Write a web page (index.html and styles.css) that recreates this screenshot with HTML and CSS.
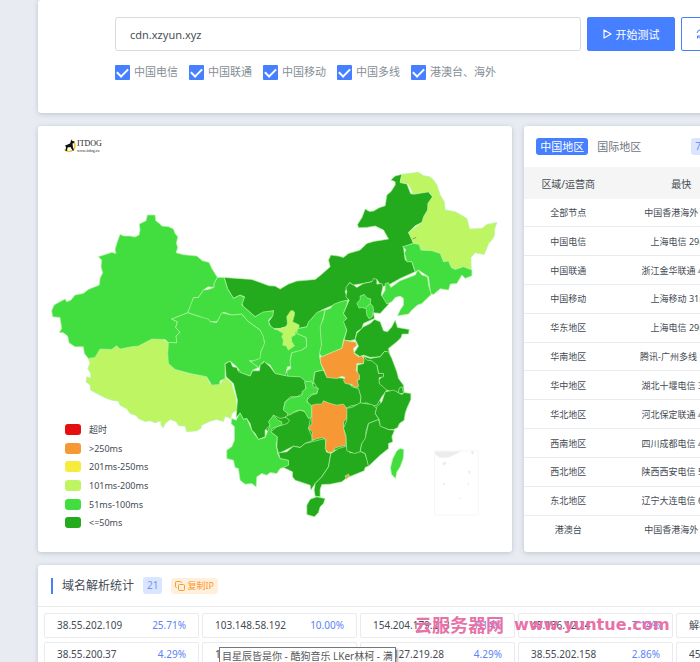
FILE: index.html
```
<!DOCTYPE html>
<html lang="zh-CN">
<head>
  <meta charset="UTF-8">
  <meta name="viewport" content="width=device-width, initial-scale=1.0">
  <title>ITDOG</title>
  <link rel="stylesheet" href="styles.css">
</head>
<body>
  <main class="page">
    <!-- Search form -->
    <form class="card search">
      <div class="search-row">
        <input type="text" class="host" aria-label="域名" value="cdn.xzyun.xyz">
        <button type="button" class="btn btn-primary">
          <svg width="9" height="10" viewBox="0 0 9 10"><path d="M1 1v8l7-4z" fill="none" stroke="#fff" stroke-width="1.2" stroke-linejoin="round"/></svg>
          开始测试
        </button>
        <button type="button" class="btn btn-outline">
          <svg width="10" height="10" viewBox="0 0 10 10"><path d="M1 4a4 4 0 0 1 7.500-1M9 6a4 4 0 0 1-7.500 1M8.500 .5v2.500H6M1.500 9.500V7H4" fill="none" stroke="#467fff"/></svg>
          持续测试
        </button>
      </div>
      <div class="lines">
        <label><input type="checkbox" checked>中国电信</label>
        <label><input type="checkbox" checked>中国联通</label>
        <label><input type="checkbox" checked>中国移动</label>
        <label><input type="checkbox" checked>中国多线</label>
        <label><input type="checkbox" checked>港澳台、海外</label>
      </div>
    </form>

    <div class="columns">
      <!-- Map -->
      <section class="card map-card">
        <svg class="map" viewBox="0 0 1422 1278" role="img" aria-label="中国地图">
          <g transform="translate(36 702)">
            <path class="ms200" d="M115-5L150-33 185-32 200-43 215-34 245-40 280-50 300-63 330-65 355-53 356 10 375 28 410 38 470 50 478 70 510 72 525 52 545 70 551 95 557 110 560 150 545 160 542 175 525 168 520 184 500 178 480 183 455 195 452 205 440 212 410 215 405 198 385 196 378 184 360 178 345 190 340 203 333 195 332 182 315 188 300 182 285 184 265 175 258 166 240 160 230 146 210 135 205 123 185 120 165 113 140 100 122 90 120 75 108 65 110 50 122 54 122 40 113 25 120 10z"/>
          </g>
          <g transform="translate(6 222)">
            <path class="ms100" d="M322 45H345L347 62 358 70 365 78 385 80 400 87 405 100 413 110 409 130 413 142 408 158 430 164 470 168 487 182 507 187 515 205 532 232 522 250 522 262 504 260 490 270 475 292 460 293 454 315 443 338 395 357 412 365 407 382 420 397 408 407 412 428 385 427 375 418 335 417 310 430 295 438 275 440 240 447 230 437 215 448 180 447 165 472 145 475 133 460 130 440 105 440 87 428 83 408 70 398 58 397 65 385 60 352 38 350 35 332 42 315 60 305 75 297 80 305 93 300 105 285 130 280 145 268 178 255 180 235 188 218 183 200 185 180 175 170 215 157 228 160 225 148 232 125 240 103 252 108 270 108 285 111 297 105 300 90 298 72 318 62z"/>
          </g>
          <g transform="translate(486 372)">
            <path class="ms50" d="M110 360L345 370 530 430 560 500 500 600 380 600 300 590 240 590 200 540 130 480z"/>
            <path class="ms50" d="M72 82L155 88 180 97 207 107 225 108 240 117 265 102 290 93 345 88 362 75 390 50 385 30 392 15 415 18 430 22 445 10 480 0 500-20 520-26 565-33 550-60 525-72 500-68 475-67 472-77 485-97 495-123 508-116 520-117 537-127 555-133 560-165 572-175 585-195 585-205 572-210 585-222 605-227 600-205 620-198 632-168 662-172 685-175 697-160 682-115 676-92 665-83 645-73 625-53 635-35 640-20 610-8 615 30 635 35 645 65 600 85 565 105 545 110 530 88 515 95 490 100 460 105 448 98 435 125 445 150 400 165 365 180 335 205 320 230 295 235 275 225 240 235 215 235 205 215 215 202 220 182 185 190 165 200 130 170 125 160 133 140 120 135 100 145 82 115z"/>
            <path class="ms100" d="M52 82H72L82 115 100 145 120 135 133 142 125 165 165 200 188 186 220 182 218 198 205 210 208 225 225 238 295 228 290 250 318 262 320 290 300 303 275 308 270 330 275 348 262 350 255 378 225 370 210 345 190 335 175 352 150 335 175 325 193 275 180 240 145 215 125 192 95 195 70 186 50 215 25 215 0 200-37 188-20 143-5 142 10 120 25 118 42 112 42 100z"/>
            <path class="ms100" d="M-37 188L0 200 25 207 30 215 50 217 65 188 95 195 125 192 145 215 180 240 190 260 193 280 182 305 180 325 160 332 148 332 165 345 175 352 157 360 150 378 125 370 110 350 90 333 75 340 75 385 60 392 58 403 35 405 20 380-30 370-75 358-95 340-97 310-95 277-70 278-72 258-60 247-73 232-68 215-85 207z"/>
            <path class="ms200" d="M272 182Q285 180 283 193L277 215 297 225 295 240 285 245 285 255 273 260 275 275 283 287 265 300 258 287 248 285 250 270 245 260 250 250 230 238 258 230 262 220 260 200z"/>
            <path class="ms100" d="M375 178L370 200 362 230 365 285 358 318 362 340 370 360 345 365 340 380 342 400 318 395 305 388 262 378 260 362 272 355 270 332 275 308 305 300 320 290 318 262 290 250 292 236 320 230 325 215 335 205 350 187z"/>
            <path class="ms100" d="M375 180L390 175 400 163 420 155 443 150 440 165 430 190 440 205 432 215 440 240 430 270 425 295 400 305 365 320 358 310 364 285 360 230 370 205z"/>
            <path class="ms50" d="M440 125L437 113 448 98 460 105 470 112 490 100 515 95 520 85 530 88 530 102 545 100 548 110 543 135 560 150 566 162 540 190 520 188 523 205 490 220 485 235 470 245 465 268 450 272 432 270 440 240 430 215 440 205 430 190 447 150 437 140z"/>
            <path class="ms100" d="M470 160L480 148 480 138 492 133 500 143 512 147 510 160 518 168 520 180 516 200 507 206 500 195 498 176 485 172 477 174z"/>
            <path class="line" d="M512 160L497 172"/>
            <path class="ms50" d="M523 208L540 215 550 242 562 245 575 230 585 210 592 232 627 238 625 252 606 252 603 262 590 275 565 295 568 310 553 304 540 320 510 322 490 315 480 320 462 308 475 288 465 268 470 250 490 230 510 220z"/>
            <path class="ms50" d="M565 305L575 325 590 365 595 385 610 405 612 430 590 430 560 420 540 415 535 390 550 375 535 370 530 345 500 335 490 318 510 325 540 320 553 304z"/>
            <path class="ms50" d="M490 318L500 330 515 332 530 345 535 370 550 370 550 380 537 383 537 400 560 420 545 440 530 465 515 468 500 458 480 462 482 440 470 410 472 345 490 340z"/>
            <path class="ms50" d="M345 365L370 360 380 380 435 385 455 410 475 415 482 440 480 462 450 468 430 480 335 480 320 450 335 435 350 430 352 415 340 395z"/>
            <path class="ms250" d="M432 270L450 274 467 276 470 285 460 295 462 310 475 320 485 317 492 328 490 340 470 340 468 362 478 375 478 388 470 390 476 408 465 412 455 403 435 400 430 390 435 382 425 378 410 385 380 382 372 360 362 340 360 322 400 305 425 295z"/>
            <path class="ms50" d="M75 342L90 333 98 350 110 352 115 365 150 378 158 362 178 362 180 345 193 335 210 350 225 370 262 378 300 380 318 395 315 425 290 440 270 440 255 455 250 475 262 490 262 500 240 505 220 495 210 525 195 540 195 560 175 568 165 550 155 540 150 520 140 505 130 508 120 490 108 502 112 450 100 400 78 380z"/>
          </g>
          <g transform="translate(906 102)">
            <path class="ms200" d="M185 43L235 37 250 47 268 50 280 60 290 75 300 105 312 125 315 150 345 155 380 175 388 207 425 205 440 193 470 187 463 207 463 225 455 240 445 250 432 283 405 278 392 292 393 330 370 320 345 328 330 320 325 305 312 305 300 280 275 275 260 270 240 270 238 255 220 250 205 217 245 187 250 170 262 150 263 130 277 110 265 95 220 103 205 72 180 68z"/>
            <path class="line river" d="M217 237L228 232"/>
            <path class="ms100" d="M220 250L237 253 242 270 275 272 300 280 310 305 325 303 333 322 345 328 370 320 395 330 395 347 375 355 365 345 350 370 330 372 325 390 300 386 280 403 271 400 265 350 235 330 225 335 215 305 200 305 193 280 197 268 187 260z"/>
            <path class="ms100" d="M225 345L233 330 245 345 262 350 265 375 273 403 245 430 232 435 215 450 205 462 172 467 180 450 190 435 190 415 180 408 165 412 155 425 140 432 125 407 135 390 135 370 145 368 152 382 180 362z"/>
          </g>
          <g transform="translate(486 762)">
            <path class="ms100" d="M95 115L108 120 120 98 130 118 140 115 155 150 175 178 195 172 210 135 205 125 220 105 233 120 245 125 245 135 215 145 215 158 232 170 228 195 233 220 240 235 265 240 265 258 240 265 230 280 210 277 200 285 185 280 170 290 168 320 155 310 135 312 120 300 115 265 105 262 100 240 80 235 80 210 95 200 103 180 103 140 93 130z"/>
            <path class="ms50" d="M212 155L230 140 262 130 268 120 255 110 275 100 300 90 315 95 332 110 325 145 340 180 315 190 300 202 280 198 250 213 235 220 230 200 232 170z"/>
            <path class="ms50" d="M235 218L260 215 280 198 300 202 315 190 375 175 378 215 392 220 385 260 365 290 345 310 332 330 330 315 285 300 277 290 277 275 250 262 265 255 265 240 240 235z"/>
            <path class="ms50" d="M392 220L415 205 440 198 450 218 480 213 495 220 507 257 495 262 492 272 440 293 425 305 390 312 365 313 360 328 360 350 345 348 342 330 345 310 365 290 385 260z"/>
            <path class="ms50" d="M435 85L455 82 480 68 515 73 530 85 525 100 537 118 505 130 497 155 498 175 485 190 480 215 463 220 440 212 437 165 430 145 440 120z"/>
            <path class="ms50" d="M505 130L535 118 540 135 565 148 583 150 575 170 578 185 565 190 565 205 540 225 505 258 495 220 480 213 485 190 495 175z"/>
            <path class="ms50" d="M555 35L580 30 605 43 612 37 632 40 632 58 620 85 615 100 612 120 598 130 592 143 580 148 565 148 540 138 537 118 525 100 530 80 545 65z"/>
            <path class="line" d="M594 39L597 24 606 20 610 39"/>
            <path class="ms100" d="M313 5L335 3 340 20 355 25 350 40 335 42 323 52 320 65 333 75 335 110 325 115 312 92 298 90 280 95 270 105 250 90 255 65 275 52 303 48 308 40 305 35 318 25z"/>
            <path class="ms250" d="M335 75L350 72 365 72 370 62 390 70 410 75 430 72 440 85 440 115 430 125 430 145 437 170 437 195 415 200 403 205 400 215 385 218 375 205 378 178 365 172 335 180 337 155 325 145 335 130z"/>
            <path class="ms250" d="M435 287L445 282 449 289 442 293 439 298z"/>
            <path class="ms50" d="M330 357L350 350 375 355 370 370 360 380 355 397 343 410 320 403 320 375z"/>
            <path class="ms100" d="M600 205L611 208 609 235 600 260 590 275 586 295 574 282 571 262 578 235 590 212z"/>
          </g>
          <!-- South China Sea inset -->
          <g transform="translate(1026 522)" fill="#ececec">
            <rect x="163" y="452" width="131" height="192" fill="none" stroke="#f6f6f6" stroke-width="3"/>
            <path d="M164 454H243L205 472 180 473 166 464zM185 490l10-6 4 5-8 7zM271 456l8-4 3 8-6 3zM264 513l6-3 1 9-5 4zM189 549h6v6h-6zM261 549h7l-4 8zM236 593l5-2v8z"/>
          </g>
        </svg>
        <div class="logo">
          <svg width="13" height="14" viewBox="0 0 26 28"><path d="M19 5a10 10 0 1 1-18 16" fill="none" stroke="#e5c72e" stroke-width="3"/><path d="M15 1l2 3 4 1-1 3-3 1 1 8 2 6h-3l-4-7-6 1-1 7H3l1-8-2-3 3-1 7-3z" fill="#111"/></svg>
          <p>ITDOG<small>www.itdog.cn</small></p>
        </div>
        <ul class="legend">
          <li><i class="timeout"></i>超时</li>
          <li><i class="ms250"></i>&gt;250ms</li>
          <li><i class="ms-yellow"></i>201ms-250ms</li>
          <li><i class="ms200"></i>101ms-200ms</li>
          <li><i class="ms100"></i>51ms-100ms</li>
          <li><i class="ms50"></i>&lt;=50ms</li>
        </ul>
      </section>

      <!-- Region table -->
      <section class="card regions">
        <div class="tabs">
          <button type="button" class="tab active">中国地区</button>
          <button type="button" class="tab">国际地区</button>
          <span class="badge">74</span>
        </div>
        <table>
          <thead>
            <tr><th class="area">区域/运营商</th><th class="fast">最快</th><th></th></tr>
          </thead>
          <tbody>
            <tr><td>全部节点</td><td>中国香港海外 2ms</td><td></td></tr>
            <tr><td>中国电信</td><td>上海电信 29ms</td><td></td></tr>
            <tr><td>中国联通</td><td>浙江金华联通 40ms</td><td></td></tr>
            <tr><td>中国移动</td><td>上海移动 31ms</td><td></td></tr>
            <tr><td>华东地区</td><td>上海电信 29ms</td><td></td></tr>
            <tr><td>华南地区</td><td>腾讯-广州多线 10ms</td><td></td></tr>
            <tr><td>华中地区</td><td>湖北十堰电信 32ms</td><td></td></tr>
            <tr><td>华北地区</td><td>河北保定联通 42ms</td><td></td></tr>
            <tr><td>西南地区</td><td>四川成都电信 43ms</td><td></td></tr>
            <tr><td>西北地区</td><td>陕西西安电信 51ms</td><td></td></tr>
            <tr><td>东北地区</td><td>辽宁大连电信 60ms</td><td></td></tr>
            <tr><td>港澳台</td><td>中国香港海外 2ms</td><td></td></tr>
          </tbody>
        </table>
      </section>
    </div>

    <!-- Resolved addresses -->
    <section class="card resolve">
      <header>
        <h2>域名解析统计</h2>
        <span class="badge">21</span>
        <button type="button" class="copy">
          <svg width="10" height="10" viewBox="0 0 10 10" fill="none" stroke="#fd9a2c"><rect x="3.500" y="3.500" width="6" height="6" rx="1"/><path d="M2 6.500H1.500a1 1 0 0 1-1-1v-4a1 1 0 0 1 1-1h4a1 1 0 0 1 1 1V2"/></svg>
          复制IP
        </button>
      </header>
      <ul class="ips">
        <li>38.55.202.109<b>25.71%</b></li>
        <li>103.148.58.192<b>10.00%</b></li>
        <li>154.204.179.213<b>7.14%</b></li>
        <li>45.136.12.24<b>7.14%</b></li>
        <li>解析失败<b>7.14%</b></li>
        <li>38.55.200.37<b>4.29%</b></li>
        <li>103.148.58.19<b>4.29%</b></li>
        <li>154.127.219.28<b>4.29%</b></li>
        <li>38.55.202.158<b>2.86%</b></li>
        <li>45.136.12.2<b>2.86%</b></li>
      </ul>
    </section>
  </main>

  <div class="tooltip">目星辰皆是你 - 酷狗音乐 LKer林柯 - 满</div>
  <div class="watermark"><span>云服务器网</span><span class="site">www.yuntue.com</span></div>
</body>
</html>
```
FILE: styles.css
```
* {
  padding: 0;
  margin: 0;
  box-sizing: border-box;
}
body {
  position: relative;
  height: 100vh;
  overflow: hidden;
  font-family: "Noto Sans", "Noto Sans CJK SC", sans-serif;
  font-size: 10px;
  color: #444b54;
  background-color: #e8ecf2;
}
button,
input {
  font-family: inherit;
}
ul {
  list-style-type: none;
}

.page {
  min-width: 901px; /* wider than small windows, the right side is cut */
  padding: 0 38px;
  display: flex;
  flex-direction: column;
  gap: 13px;
}

.card {
  background-color: #fff;
  border-radius: 3px;
  box-shadow: 0 1px 5px rgba(60, 75, 100, 0.25);
}

/* Search */
.search {
  padding: 17px 94px 33px 77px;
}
.search-row {
  display: flex;
  gap: 6px;
}
.host {
  flex: 1;
  min-width: 0;
  height: 34px;
  padding: 0 14px;
  font-size: 11px;
  color: #495057;
  border: 1px solid #d9d9d9;
  border-radius: 3px;
}
.btn {
  width: 88px;
  height: 34px;
  display: flex;
  align-items: center;
  justify-content: center;
  gap: 4px;
  font-size: 11px;
  border: 1px solid #467fff;
  border-radius: 2px;
  white-space: nowrap;
}
.btn-primary {
  background-color: #467fff;
  color: #fff;
}
.btn-outline {
  background-color: #fff;
  color: #467fff;
}
.lines {
  display: flex;
  gap: 11px;
  margin-top: 13px;
}
.lines label {
  display: flex;
  align-items: center;
  gap: 4px;
  font-size: 11px;
  line-height: 16px;
  color: #868e96;
}
.lines input {
  appearance: none;
  width: 15px;
  height: 15px;
  display: flex;
  justify-content: center;
  background-color: #467fff;
  border-radius: 1px;
}
.lines input:checked::after {
  content: "";
  width: 5px;
  height: 9px;
  margin-top: 2px;
  border: solid #fff;
  border-width: 0 2px 2px 0;
  transform: rotate(45deg);
}

/* Map */
.columns {
  display: grid;
  grid-template-columns: 7fr 5fr;
  gap: 12px;
}
.map-card {
  position: relative;
}
.map {
  display: block;
  width: 100%;
}
.map path {
  stroke: #b5f3a5;
  stroke-width: 2;
  stroke-linejoin: round;
}
.map g[fill] path {
  stroke: none;
}
.map .line {
  fill: none;
}
.map .river {
  stroke: #647c4e;
}
.timeout { background-color: #e60f0f; }
.ms250 { background-color: #f69833; fill: #f69833; }
.ms-yellow { background-color: #f5ec3d; }
.ms200 { background-color: #bef663; fill: #bef663; }
.ms100 { background-color: #42dd3f; fill: #42dd3f; }
.ms50 { background-color: #24aa1d; fill: #24aa1d; }

.logo {
  position: absolute;
  top: 13px;
  left: 26px;
  display: flex;
  font-family: "Liberation Serif", serif;
  font-size: 8px;
  line-height: 9px;
  color: #222;
}
.logo small {
  display: block;
  font-size: 4px;
  line-height: 5px;
}
.legend {
  position: absolute;
  left: 27px;
  bottom: 20px;
  height: 112px;
  display: grid;
  grid-template-rows: repeat(6, 1fr);
}
.legend li {
  display: flex;
  align-items: center;
  gap: 8px;
  font-size: 9px;
}
.legend i {
  width: 16px;
  height: 11px;
  border-radius: 3px;
}

/* Regions */
.tabs {
  display: flex;
  align-items: center;
  height: 41px;
  padding-left: 12px;
}
.tab {
  padding: 0 4px;
  line-height: 17px;
  font-size: 11px;
  color: #6c757d;
  background: none;
  border: none;
  border-radius: 3px;
}
.tab + .tab {
  margin: 0 46px 0 5px;
}
.tab.active {
  color: #fff;
  background-color: #467fff;
}
.badge {
  padding: 0 4px;
  font-size: 10px;
  line-height: 17px;
  color: #6f93f8;
  background-color: #dae5ff;
  border-radius: 3px;
}
table {
  width: 100%;
  height: 376px;
  table-layout: fixed;
  border-collapse: collapse;
  text-align: center;
}
.area {
  width: 88px;
}
.fast {
  width: 138px;
}
th {
  height: 32px;
  font-size: 10px;
  font-weight: 400;
  background-color: #f5f5f5;
}
td {
  font-size: 9px;
  border-bottom: 1px solid #e9ecef;
}
tr:last-child td {
  border: none;
}

/* Resolve statistics */
.resolve header {
  display: flex;
  align-items: center;
  height: 42px;
  padding: 0 13px;
  border-bottom: 1px solid #e9ecef;
}
.resolve h2 {
  padding-left: 9px;
  border-left: 2px solid #467fff;
  font-size: 12px;
  font-weight: 400;
  line-height: 16px;
  margin-right: 9px;
}
.copy {
  display: flex;
  align-items: center;
  gap: 2px;
  margin-left: 9px;
  padding: 0 4px;
  font-size: 9px;
  line-height: 16px;
  color: #fd9a2c;
  background-color: #fff0dd;
  border: none;
  border-radius: 3px;
}
.ips {
  display: grid;
  grid-template-columns: repeat(auto-fill, 155px);
  gap: 4px 3px;
  padding: 6px;
}
.ips li {
  display: flex;
  justify-content: space-between;
  padding: 0 12px;
  line-height: 23px;
  border: 1px solid #e9ebee;
  border-radius: 2px;
}
.ips b {
  font-weight: 400;
  color: #5b83f5;
}

.tooltip {
  position: absolute;
  left: 219px;
  top: 647px;
  padding: 0 2px;
  font-size: 10px;
  line-height: 16px;
  white-space: nowrap;
  color: #575757;
  background-color: #fff;
  border: 1px solid #767676;
  box-shadow: 2px 2px 2px rgba(0, 0, 0, 0.3);
}
.watermark {
  position: absolute;
  left: 414px;
  top: 612px;
  display: flex;
  gap: 10px;
  font-size: 18px;
  font-weight: 700;
  line-height: 26px;
  white-space: nowrap;
  color: #e872a8;
}
.site {
  font-family: "DejaVu Sans", sans-serif;
  font-size: 16px;
}
.lines input:checked::after {
  margin-top: 1px;
}
```
